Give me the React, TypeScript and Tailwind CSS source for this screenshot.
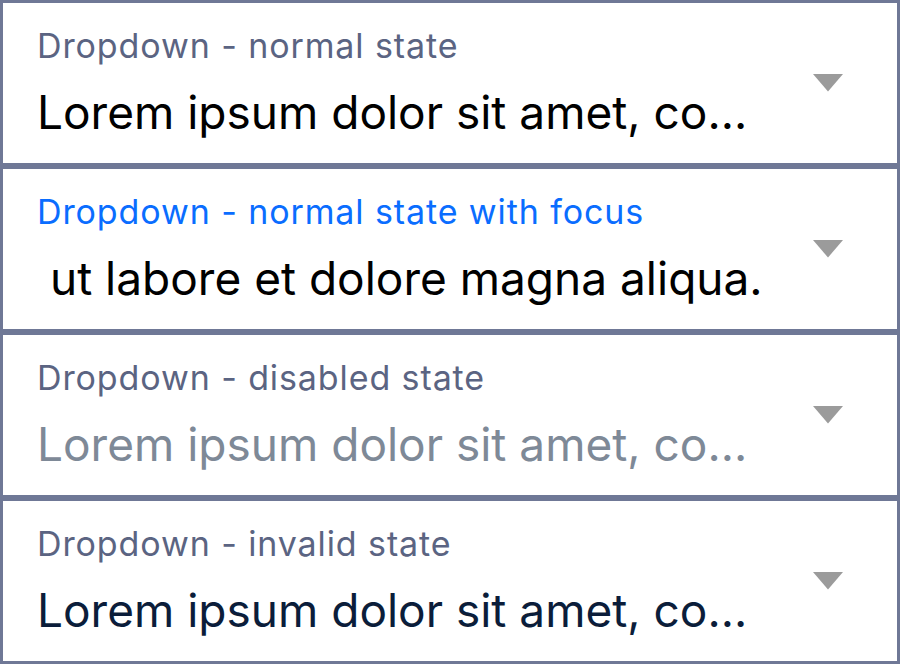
import React from "react";

type Item = { label: string; value: string; labelColor: string; valueColor: string };

const items: Item[] = [
  { label: "Dropdown - normal state", value: "Lorem ipsum dolor sit amet, co...", labelColor: "text-[#5b6482]", valueColor: "text-black" },
  { label: "Dropdown - normal state with focus", value: "\u00a0ut labore et dolore magna aliqua.", labelColor: "text-[#0a6dff]", valueColor: "text-black" },
  { label: "Dropdown - disabled state", value: "Lorem ipsum dolor sit amet, co...", labelColor: "text-[#5b6482]", valueColor: "text-[#7e8997]" },
  { label: "Dropdown - invalid state", value: "Lorem ipsum dolor sit amet, co...", labelColor: "text-[#5b6482]", valueColor: "text-[#0b1d3a]" },
];

function Box({ item }: { item: Item }) {
  return (
    <div className="flex h-[166px] items-center border-[3px] border-[#6f7896] bg-white pl-[34px] pr-[54px]">
      <div className="flex h-full flex-1 flex-col pt-[23px]">
        <div className={`text-[34px] leading-[40px] tracking-[0.9px] whitespace-nowrap ${item.labelColor}`}>{item.label}</div>
        <div className={`mt-[18px] text-[46px] leading-[56px] whitespace-nowrap ${item.valueColor}`}>{item.value}</div>
      </div>
      <svg width="30" height="18" viewBox="0 0 30 18" className="shrink-0">
        <path d="M0 0 L30 0 L15 17.5 Z" fill="#9b9b9b" />
      </svg>
    </div>
  );
}

export default function App() {
  return (
    <div className="flex w-[900px] flex-col bg-white" style={{ fontFamily: "Inter, 'Noto Sans', sans-serif" }}>
      {items.map((it, i) => (
        <Box key={i} item={it} />
      ))}
    </div>
  );
}
